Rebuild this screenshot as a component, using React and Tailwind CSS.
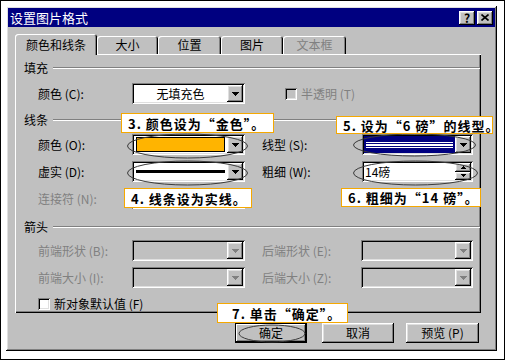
const raised = 'shadow-[inset_-1px_-1px_#000,inset_1px_1px_#fff,inset_-2px_-2px_#808080,inset_2px_2px_#dfdfdf]';
const sunken = 'shadow-[inset_1px_1px_#808080,inset_-1px_-1px_#fff,inset_2px_2px_#000,inset_-2px_-2px_#dfdfdf]';
const ui = "font-['Noto_Sans_CJK_SC',sans-serif] text-[12px] leading-none";

function Arrow({ disabled }) {
  const c = disabled ? '#808080' : '#000';
  return (
    <svg width="7" height="4" viewBox="0 0 7 4" shapeRendering="crispEdges">
      <rect x="0" y="0" width="7" height="1" fill={c} />
      <rect x="1" y="1" width="5" height="1" fill={c} />
      <rect x="2" y="2" width="3" height="1" fill={c} />
      <rect x="3" y="3" width="1" height="1" fill={c} />
    </svg>
  );
}

function DropBtn({ disabled }) {
  return (
    <div className={`w-[16px] h-full bg-[#c0c0c0] flex items-center justify-center ${raised}`}>
      <Arrow disabled={disabled} />
    </div>
  );
}

function Combo({ className = 'w-[113px]', disabled, children }) {
  return (
    <div className={`h-[21px] p-[2px] flex ${sunken} ${disabled ? 'bg-[#c0c0c0]' : 'bg-white'} ${className}`}>
      <div className="flex-1 flex items-center min-w-0">{children}</div>
      <DropBtn disabled={disabled} />
    </div>
  );
}

function Spinner() {
  return (
    <div className={`w-[111px] h-[21px] p-[2px] flex bg-white ${sunken}`}>
      <div className="flex-1 flex items-center pl-[1px]">14磅</div>
      <div className="w-[16px] flex flex-col">
        <div className={`flex-1 bg-[#c0c0c0] flex items-center justify-center ${raised}`}>
          <svg width="5" height="3" viewBox="0 0 5 3" shapeRendering="crispEdges">
            <rect x="2" y="0" width="1" height="1" fill="#000" />
            <rect x="1" y="1" width="3" height="1" fill="#000" />
            <rect x="0" y="2" width="5" height="1" fill="#000" />
          </svg>
        </div>
        <div className={`flex-1 bg-[#c0c0c0] flex items-center justify-center ${raised}`}>
          <svg width="5" height="3" viewBox="0 0 5 3" shapeRendering="crispEdges">
            <rect x="0" y="0" width="5" height="1" fill="#000" />
            <rect x="1" y="1" width="3" height="1" fill="#000" />
            <rect x="2" y="2" width="1" height="1" fill="#000" />
          </svg>
        </div>
      </div>
    </div>
  );
}

function Check({ disabled }) {
  return <div className={`w-[12px] h-[12px] shrink-0 ${sunken} ${disabled ? 'bg-[#c0c0c0]' : 'bg-white'}`} />;
}

function Header({ text }) {
  return (
    <div className="flex items-center h-[16px]">
      <span className="pl-[9px] w-[38px]">{text}</span>
      <div className="flex-1 mr-[1px] h-[2px] border-t border-[#808080] border-b border-b-white" />
    </div>
  );
}

function Row({ className = '', children }) {
  return <div className={`flex items-center h-[21px] ${className}`}>{children}</div>;
}

function Label({ children, w = 'w-[94px]', disabled, className = '' }) {
  return <span className={`${w} ${disabled ? 'text-[#808080]' : 'text-black'} ${className}`}>{children}</span>;
}

function Tab({ children, active, disabled, w }) {
  return (
    <div
      className={`${w} flex items-center justify-center bg-[#c0c0c0] rounded-t-[3px] shadow-[inset_1px_1px_#fff,inset_-1px_0_#000,inset_-2px_0_#808080] ${
        active ? 'h-[21px] -mb-[1px] relative z-10' : 'h-[18px]'
      } ${disabled ? 'text-[#808080]' : 'text-black'}`}
    >
      {children}
    </div>
  );
}

function Button({ children, def, className = '' }) {
  return (
    <div
      className={`h-[20px] flex items-center justify-center bg-[#c0c0c0] ${
        def
          ? 'shadow-[inset_0_0_0_1px_#000,inset_-2px_-2px_#000,inset_2px_2px_#fff,inset_-3px_-3px_#808080]'
          : raised
      } ${className}`}
    >
      {children}
    </div>
  );
}

function Callout({ className, children }) {
  return (
    <div
      className={`absolute bg-white border border-[#f5a800] flex items-center pl-[6px] font-['Noto_Sans_CJK_SC',sans-serif] font-bold text-[13px] tracking-[1px] text-black whitespace-nowrap ${className}`}
    >
      {children}
    </div>
  );
}

export default function App() {
  return (
    <div className={`relative w-[505px] h-[360px] bg-white border border-black p-[5px] ${ui}`}>
      <div className={`w-[491px] h-[345px] bg-[#c0c0c0] p-[2px] ${raised}`}>
        {/* title bar */}
        <div className="h-[19px] bg-[#000080] flex items-center pl-[2px] pr-[2px] text-white">
          <span className="flex-1 text-[13px]">设置图片格式</span>
          <div className={`w-[16px] h-[14px] bg-[#c0c0c0] flex items-center justify-center text-black font-bold text-[12px] ${raised}`}>?</div>
          <div className={`w-[16px] h-[14px] ml-[2px] bg-[#c0c0c0] flex items-center justify-center ${raised}`}>
            <svg width="8" height="7" viewBox="0 0 8 7">
              <path d="M0.5 0.5L7.5 6.5M7.5 0.5L0.5 6.5" stroke="#000" strokeWidth="1.6" />
            </svg>
          </div>
        </div>

        {/* tabs */}
        <div className="flex items-end h-[20px] mt-[7px] pl-[7px]">
          <Tab active w="w-[82px]">颜色和线条</Tab>
          <Tab w="w-[61px]">大小</Tab>
          <Tab w="w-[63px]">位置</Tab>
          <Tab w="w-[62px]">图片</Tab>
          <Tab disabled w="w-[63px]">文本框</Tab>
        </div>

        {/* panel */}
        <div className="ml-[7px] w-[466px] h-[259px] pt-[6px] shadow-[inset_1px_1px_#fff,inset_-1px_-1px_#000,inset_-2px_-2px_#808080]">
          <Header text="填充" />
          <Row className="mt-[7px] pl-[23px]">
            <Label>颜色 (C):</Label>
            <Combo>
              <span className="flex-1 text-center">无填充色</span>
            </Combo>
            <div className="ml-[40px] flex items-center gap-[4px]">
              <Check disabled />
              <span className="text-[#808080]">半透明 (T)</span>
            </div>
          </Row>

          <div className="mt-[8px]">
            <Header text="线条" />
          </div>
          <Row className="mt-[6px] pl-[23px]">
            <Label>颜色 (O):</Label>
            <Combo>
              <div className="w-full h-[15px] mx-[2px] bg-[#ffb400] border border-black" />
            </Combo>
            <Label w="w-[100px]" className="ml-[17px]">线型 (S):</Label>
            <Combo className="w-[111px]">
              <div className="w-full h-full bg-[#000080] flex flex-col justify-center px-[2px]">
                <div className="h-[1px] bg-white" />
                <div className="h-[2px] bg-white mt-[1px]" />
                <div className="h-[1px] bg-white mt-[1px]" />
              </div>
            </Combo>
          </Row>
          <Row className="mt-[6px] pl-[23px]">
            <Label>虚实 (D):</Label>
            <Combo>
              <div className="w-full h-[3px] mx-[2px] bg-black" />
            </Combo>
            <Label w="w-[100px]" className="ml-[17px]">粗细 (W):</Label>
            <Spinner />
          </Row>
          <Row className="mt-[6px] pl-[23px]">
            <Label disabled>连接符 (N):</Label>
            <Combo />
          </Row>

          <div className="mt-[10px]">
            <Header text="箭头" />
          </div>
          <Row className="mt-[5px] pl-[23px]">
            <Label disabled>前端形状 (B):</Label>
            <Combo disabled />
            <Label disabled w="w-[99px]" className="ml-[17px]">后端形状 (E):</Label>
            <Combo disabled className="w-[112px]" />
          </Row>
          <Row className="mt-[6px] pl-[23px]">
            <Label disabled>前端大小 (I):</Label>
            <Combo disabled />
            <Label disabled w="w-[99px]" className="ml-[17px]">后端大小 (Z):</Label>
            <Combo disabled className="w-[112px]" />
          </Row>
          <div className="mt-[8px] h-[16px] flex items-center gap-[4px] pl-[23px]">
            <Check />
            <span>新对象默认值 (F)</span>
          </div>
        </div>

        {/* buttons */}
        <div className="flex mt-[10px] pl-[227px]">
          <Button def className="w-[72px]">确定</Button>
          <Button className="w-[72px] ml-[15px]">取消</Button>
          <Button className="w-[73px] ml-[12px]">预览 (P)</Button>
        </div>
      </div>

      {/* annotation ellipses */}
      <svg className="absolute left-0 top-0 pointer-events-none" width="505" height="360" viewBox="0 0 505 360">
        <g fill="none" stroke="#3a3a3a" strokeWidth="1">
          <ellipse cx="186.5" cy="145" rx="60" ry="12" />
          <ellipse cx="186.5" cy="172" rx="60" ry="12" />
          <ellipse cx="413.5" cy="144" rx="61" ry="11" />
          <ellipse cx="414.5" cy="172" rx="62" ry="12" />
          <ellipse cx="271" cy="332.5" rx="33" ry="8.5" />
        </g>
      </svg>

      {/* callouts */}
      <Callout className="left-[120px] top-[112px] w-[153px] h-[20px]">3. 颜色设为“金色”。</Callout>
      <Callout className="left-[335px] top-[115px] w-[157px] h-[18px]">5. 设为“6 磅”的线型。</Callout>
      <Callout className="left-[123px] top-[187px] w-[128px] h-[20px]">4. 线条设为实线。</Callout>
      <Callout className="left-[340px] top-[187px] w-[140px] h-[19px]">6. 粗细为“14 磅”。</Callout>
      <Callout className="left-[216px] top-[302px] w-[131px] h-[20px] pl-[14px]">7. 单击“确定”。</Callout>
    </div>
  );
}
